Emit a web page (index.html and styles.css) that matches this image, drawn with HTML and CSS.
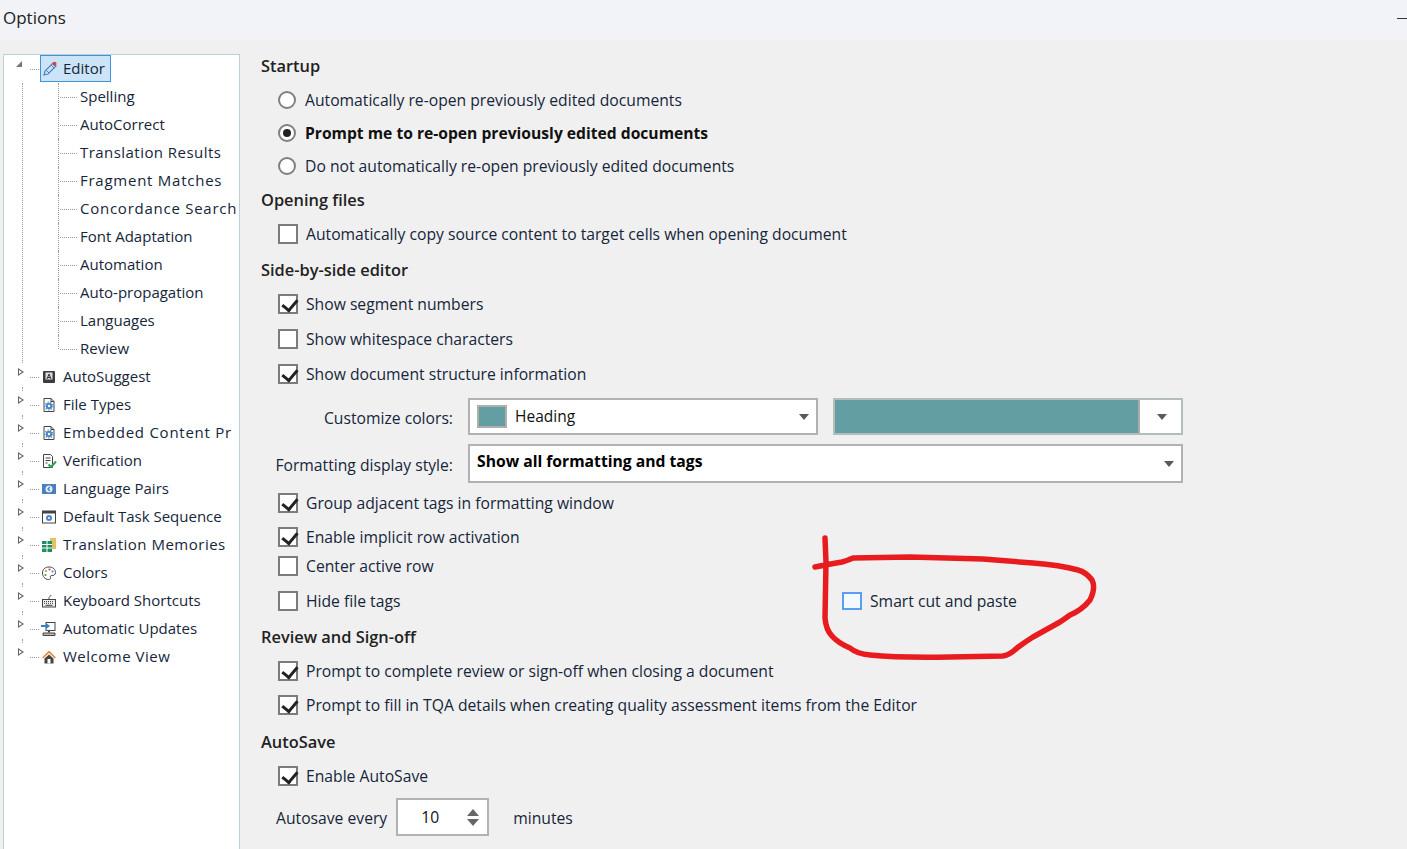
FILE: index.html
```html
<!DOCTYPE html>
<html lang="en">
<head>
<meta charset="utf-8">
<title>Options</title>
<link rel="stylesheet" href="styles.css">
</head>
<body>
<svg class="defs" width="0" height="0" aria-hidden="true">
  <symbol id="i-docgear" viewBox="0 0 16 16">
    <path d="M3 1.500h7l3 3v10H3z" fill="#fff" stroke="#444" stroke-width="1"/>
    <path d="M10 1.500v3h3" fill="none" stroke="#444"/>
    <circle cx="8" cy="9" r="3.200" fill="#4a86c5"/>
    <circle cx="8" cy="9" r="4" fill="none" stroke="#4a86c5" stroke-width="1.200" stroke-dasharray="1.400 1.400"/>
    <circle cx="8" cy="9" r="1.200" fill="#fff"/>
  </symbol>
</svg>
<header class="titlebar">
  <span class="title">Options</span>
  <span class="minimize"></span>
</header>
<div class="main">
  <nav class="tree">
    <div class="node root open">
      <span class="expander-open"></span>
      <span class="selected">
        <svg class="icon" viewBox="0 0 16 16"><path d="M2 14l1-4 8-8 3 3-8 8z" fill="#cfe0f0" stroke="#4a86c5" stroke-width="1.200"/><path d="M4.500 9.500l2.500 2.500M9 4l3 3" stroke="#4a86c5"/><circle cx="12.500" cy="2.800" r="2" fill="#d9453c"/></svg>
        <span class="label">Editor</span>
      </span>
    </div>
    <div class="children">
      <div class="node child first"><span class="label">Spelling</span></div>
      <div class="node child"><span class="label">AutoCorrect</span></div>
      <div class="node child"><span class="label wide">Translation Results</span></div>
      <div class="node child"><span class="label wider">Fragment Matches</span></div>
      <div class="node child"><span class="label wider">Concordance Search</span></div>
      <div class="node child"><span class="label">Font Adaptation</span></div>
      <div class="node child"><span class="label">Automation</span></div>
      <div class="node child"><span class="label">Auto-propagation</span></div>
      <div class="node child"><span class="label">Languages</span></div>
      <div class="node child last"><span class="label">Review</span></div>
    </div>
    <div class="node root"><span class="expander"></span>
      <svg class="icon" viewBox="0 0 16 16"><rect x="2" y="2" width="12" height="12" rx="1" fill="#3c3c3c"/><rect x="4.500" y="3.500" width="7" height="7" fill="#ddd"/><path d="M6 10l2-5 2 5M6.800 8.500h2.400" stroke="#333" fill="none"/></svg>
      <span class="label">AutoSuggest</span></div>
    <div class="node root"><span class="expander"></span><svg class="icon"><use href="#i-docgear"/></svg><span class="label">File Types</span></div>
    <div class="node root"><span class="expander"></span><svg class="icon"><use href="#i-docgear"/></svg><span class="label wider">Embedded Content Pr</span></div>
    <div class="node root"><span class="expander"></span>
      <svg class="icon" viewBox="0 0 16 16"><path d="M2.500 1.500h7l2 2v11h-9z" fill="#fff" stroke="#444"/><path d="M4.500 5h5M4.500 7.500h5M4.500 10h2" stroke="#444"/><path d="M7.500 11.500l2.500 2.500 5-5.500" fill="none" stroke="#2f9e5b" stroke-width="2"/></svg>
      <span class="label">Verification</span></div>
    <div class="node root"><span class="expander"></span>
      <svg class="icon" viewBox="0 0 16 16"><rect x="1" y="3" width="14" height="10" fill="#4a80bd"/><circle cx="8" cy="8" r="3.500" fill="#e6eff8"/><path d="M8.800 6L7 8l1.800 2" fill="none" stroke="#4a80bd" stroke-width="1.400"/></svg>
      <span class="label">Language Pairs</span></div>
    <div class="node root"><span class="expander"></span>
      <svg class="icon" viewBox="0 0 16 16"><rect x="1.500" y="2" width="13" height="12" fill="#fff" stroke="#444"/><rect x="1.500" y="2" width="13" height="2.500" fill="#444"/><circle cx="8" cy="9" r="3" fill="#4a86c5"/><circle cx="8" cy="9" r="1" fill="#fff"/></svg>
      <span class="label">Default Task Sequence</span></div>
    <div class="node root"><span class="expander"></span>
      <svg class="icon" viewBox="0 0 16 16"><rect x="9" y="1" width="6" height="11" fill="#e8c063"/><rect x="1" y="4" width="10" height="11" fill="#1f8f5f"/><path d="M6 4v11M1 7.500h10M1 11h10" stroke="#fff"/></svg>
      <span class="label wide-more">Translation Memories</span></div>
    <div class="node root"><span class="expander"></span>
      <svg class="icon" viewBox="0 0 16 16"><path d="M8 2c4 0 6.500 2.500 6.500 5.500 0 2.500-2 3-3.500 3-1.500 0-2 1-1.500 2 .5 1.200-.5 2-2 2C4 14.500 1.500 11.500 1.500 8S4 2 8 2z" fill="#fff" stroke="#444"/><circle cx="5" cy="6" r="1.100" fill="#d9823c"/><circle cx="8.500" cy="4.500" r="1.100" fill="#c94a4a"/><circle cx="11.500" cy="6.500" r="1.100" fill="#4a86c5"/><circle cx="4.500" cy="10" r="1.100" fill="#3f9e5f"/></svg>
      <span class="label">Colors</span></div>
    <div class="node root"><span class="expander"></span>
      <svg class="icon" viewBox="0 0 16 16"><path d="M8 6V4.500C8 3 10 4 10 2" fill="none" stroke="#555"/><rect x="1.500" y="6.500" width="13" height="7.500" fill="#eee" stroke="#444"/><path d="M3 8.500h10M3 10.300h10" stroke="#444" stroke-dasharray="1 1"/><path d="M4.500 12.300h7" stroke="#444"/></svg>
      <span class="label">Keyboard Shortcuts</span></div>
    <div class="node root"><span class="expander"></span>
      <svg class="icon" viewBox="0 0 16 16"><rect x="5" y="1.500" width="9" height="8" fill="#fff" stroke="#444"/><path d="M8 9.500v2" stroke="#444" stroke-width="2"/><path d="M2 12h12v2.500H2z" fill="#bbb" stroke="#444"/><path d="M0 5h6" stroke="#3a7fc4" stroke-width="2"/><path d="M5 2l4 3-4 3z" fill="#3a7fc4"/></svg>
      <span class="label">Automatic Updates</span></div>
    <div class="node root end"><span class="expander"></span>
      <svg class="icon" viewBox="0 0 16 16"><path d="M8 1.500L1 8.500l1.200 1L8 4l5.800 5.500 1.200-1z" fill="#e58a3a"/><path d="M3.500 9.500L8 5.500l4.500 4v5h-9z" fill="#444"/><rect x="6.500" y="10" width="3" height="4.500" fill="#fff"/></svg>
      <span class="label wide-more">Welcome View</span></div>
  </nav>

  <form class="form">
    <div class="row heading">Startup</div>
    <label class="row indent"><span class="radio"></span><span class="text">Automatically re-open previously edited documents</span></label>
    <label class="row indent mt9"><span class="radio on"></span><span class="text strong">Prompt me to re-open previously edited documents</span></label>
    <label class="row indent mt9"><span class="radio"></span><span class="text">Do not automatically re-open previously edited documents</span></label>
    <div class="row heading">Opening files</div>
    <label class="row indent"><span class="box"></span><span class="text">Automatically copy source content to target cells when opening document</span></label>
    <div class="row heading mt12">Side-by-side editor</div>
    <label class="row indent"><span class="box checked"></span><span class="text">Show segment numbers</span></label>
    <label class="row indent mt11"><span class="box"></span><span class="text">Show whitespace characters</span></label>
    <label class="row indent mt11"><span class="box checked"></span><span class="text">Show document structure information</span></label>

    <div class="row combo-row mt12">
      <span class="field-label">Customize colors:</span>
      <div class="combo heading-combo"><span class="swatch"></span><span class="combo-text">Heading</span><span class="arrow"></span></div>
      <div class="combo color-combo"><span class="color-fill"></span><span class="color-drop"><span class="arrow"></span></span></div>
    </div>
    <div class="row format-row mt9">
      <span class="field-label">Formatting display style:</span>
      <div class="combo format-combo"><span class="combo-text bold">Show all formatting and tags</span><span class="arrow"></span></div>
    </div>

    <label class="row indent mt8"><span class="box checked"></span><span class="text">Group adjacent tags in formatting window</span></label>
    <label class="row indent"><span class="box checked"></span><span class="text">Enable implicit row activation</span></label>
    <label class="row indent mt5"><span class="box"></span><span class="text">Center active row</span></label>
    <div class="row indent mt11">
      <label class="option half"><span class="box"></span><span class="text">Hide file tags</span></label>
      <label class="option"><span class="box focus"></span><span class="text">Smart cut and paste</span></label>
    </div>
    <div class="row heading mt12">Review and Sign-off</div>
    <label class="row indent"><span class="box checked"></span><span class="text">Prompt to complete review or sign-off when closing a document</span></label>
    <label class="row indent"><span class="box checked"></span><span class="text">Prompt to fill in TQA details when creating quality assessment items from the Editor</span></label>
    <div class="row heading mt13">AutoSave</div>
    <label class="row indent"><span class="box checked"></span><span class="text">Enable AutoSave</span></label>
    <div class="row spin-row">
      <span class="spin-label">Autosave every</span>
      <div class="spinner"><span class="spin-value">10</span><span class="spin-arrows"><span class="up"></span><span class="down"></span></span></div>
      <span class="spin-label">minutes</span>
    </div>
  </form>
</div>
<svg class="scribble" width="1407" height="849" viewBox="0 0 1407 849" aria-hidden="true">
  <path d="M825 538 L826 562 L825 618 Q826 630 832 636 Q838 643 850 648 Q857 654 870 655 Q900 658 950 657 L1003 656 Q1010 655 1017 648 Q1025 642 1033 637 L1060 622 Q1066 618 1070 615 Q1082 610 1090 600 Q1096 588 1092 580 Q1086 572 1078 570 Q1060 565 1033 563 L983 559 L910 557 L853 558 Q846 561 842 562 Q830 564 815 567" fill="none" stroke="#e81c1f" stroke-width="5.500" stroke-linecap="round" stroke-linejoin="round"/>
</svg>
</body>
</html>
```
FILE: styles.css
```css
* { box-sizing: border-box; }
html, body { margin: 0; height: 100%; overflow: hidden; }
body {
  background: #f0f0f0;
  font-family: "Open Sans", "Noto Sans", sans-serif;
  font-size: 15px;
  color: #16263a;
}
.defs { position: absolute; }

.titlebar {
  height: 40px;
  background: #f1f3f9;
  display: flex;
  align-items: center;
  justify-content: space-between;
  padding-left: 3px;
}
.title { font-size: 17px; color: #222; margin-top: -6px; }
.minimize { width: 10px; height: 1px; background: #333; margin-top: -4px; }

.main { display: flex; height: 809px; }

.tree {
  width: 237px;
  margin: 14px 0 -20px 3px;
  background: #fff;
  border: 1px solid #bcd0da;
  flex: none;
  overflow: hidden;
}
.node {
  position: relative;
  display: flex;
  align-items: center;
  height: 28px;
  white-space: nowrap;
}
.root { padding-left: 37px; gap: 6px; }
.root.open { padding-left: 36px; align-items: flex-start; }
.child { padding-left: 76px; }
.selected {
  display: flex;
  align-items: center;
  gap: 5px;
  height: 27px;
  width: 71px;
  background: #cce4f7;
  border: 1px solid #3d94d6;
  padding-left: 1px;
}
.icon { width: 16px; height: 16px; flex: none; }
.label { margin-top: -2px; }
.wide { letter-spacing: .45px; }
.wide-more { letter-spacing: .5px; }
.wider { letter-spacing: .75px; }

/* tree connectors */
.root::before {
  content: "";
  position: absolute;
  left: 26px;
  width: 9px;
  top: 14px;
  border-top: 1px dotted #999;
}
.child::before {
  content: "";
  position: absolute;
  left: 56px;
  width: 17px;
  top: 14px;
  border-top: 1px dotted #999;
}
.child::after {
  content: "";
  position: absolute;
  left: 54px;
  top: 0;
  height: 28px;
  border-left: 1px dotted #999;
}
.child.last::after { height: 14px; }
.root:not(.open):not(.end)::after {
  content: "";
  position: absolute;
  left: 18px;
  top: 24px;
  height: 4px;
  border-left: 1px dotted #999;
}
.children {
  position: relative;
}
.children::before {
  content: "";
  position: absolute;
  left: 18px;
  top: 0;
  bottom: 0;
  border-left: 1px dotted #999;
}
.expander {
  position: absolute;
  left: 14px;
  top: 5px;
  width: 0;
  height: 0;
  border-left: 6px solid #666;
  border-top: 4.500px solid transparent;
  border-bottom: 4.500px solid transparent;
}
.expander::after {
  content: "";
  position: absolute;
  left: -5px;
  top: -2.500px;
  border-left: 3px solid #fff;
  border-top: 2.500px solid transparent;
  border-bottom: 2.500px solid transparent;
}
.expander-open {
  position: absolute;
  left: 12px;
  top: 6px;
  width: 0;
  height: 0;
  border-bottom: 6px solid #777;
  border-left: 6px solid transparent;
}

/* form */
.form {
  flex: 1;
  padding: 14px 0 0 21px;
  display: flex;
  flex-direction: column;
  min-width: 0;
  font-size: 15.700px;
}
.row {
  display: flex;
  align-items: center;
  height: 24px;
  margin-top: 10px;
  flex: none;
  white-space: nowrap;
}
.text { margin-top: -1px; }
.heading { font-weight: 600; color: #222; font-size: 16.400px; padding-bottom: 2px; }
.form > .row:first-child { margin-top: 0; }
.mt5 { margin-top: 5px; }
.mt8 { margin-top: 8px; }
.mt9 { margin-top: 9px; }
.mt11 { margin-top: 11px; }
.mt12 { margin-top: 12px; }
.mt13 { margin-top: 13px; }
.indent { padding-left: 17px; }
.option { display: flex; align-items: center; }
.half { width: 564px; }
.strong { font-weight: 700; color: #111; font-size: 15.650px; }

.radio {
  width: 18px;
  height: 18px;
  margin-right: 9px;
  border-radius: 50%;
  border: 2px solid #808080;
  background: #fff;
  flex: none;
  display: flex;
  align-items: center;
  justify-content: center;
}
.radio.on::after {
  content: "";
  width: 8px;
  height: 8px;
  border-radius: 50%;
  background: #222;
}
.box {
  position: relative;
  width: 20px;
  height: 20px;
  margin-right: 8px;
  border: 2px solid #7c7c7c;
  background: #fff;
  flex: none;
}
.box.checked::after {
  content: "";
  position: absolute;
  left: 5px;
  top: 0;
  width: 6.500px;
  height: 12px;
  border-right: 3px solid #222;
  border-bottom: 3px solid #222;
  transform: rotate(40deg);
}
.box.focus {
  height: 18px;
  border-color: #5b9df5;
  background: #f3f9ff;
}

.combo-row { height: 37px; }
.format-row { height: 39px; }
.field-label { width: 192px; text-align: right; margin-right: 15px; flex: none; padding-top: 2px; }
.combo {
  display: flex;
  align-items: center;
  background: #fff;
  border: 2px solid #b2b2b2;
  height: 100%;
  position: relative;
}
.heading-combo { width: 350px; padding-left: 7px; margin-right: 15px; }
.swatch {
  width: 30px;
  height: 23px;
  background: #629ea2;
  border: 2px solid #aeaeae;
  margin-right: 8px;
  margin-top: -1px;
}
.combo-text { font-size: 15.500px; color: #111; margin-top: -2px; }
.bold { font-weight: 700; color: #000; margin-top: -5px; font-size: 15.700px; }
.arrow {
  width: 0;
  height: 0;
  border-top: 6px solid #5a5a5a;
  border-left: 5.500px solid transparent;
  border-right: 5.500px solid transparent;
  position: absolute;
  right: 7px;
  top: 14px;
}
.color-combo { width: 350px; align-items: stretch; border-color: #b5bcbc; }
.color-fill { width: 305px; background: #629ea2; border-right: 2px solid #aaa; }
.color-drop { flex: 1; position: relative; }
.color-drop .arrow { right: 14px; top: 14px; }
.format-combo { width: 715px; padding-left: 7px; }
.format-combo .arrow { right: 7px; top: 15px; }

.spin-row { height: 38px; padding-left: 15px; }
.spin-label { padding-top: 1px; }
.spinner {
  width: 93px;
  height: 38px;
  margin: 0 24px 0 9px;
  background: #fff;
  border: 2px solid #b2b2b2;
  display: flex;
  align-items: center;
  justify-content: space-between;
  padding: 0 8px 0 23px;
  color: #111;
}
.spin-arrows { display: flex; flex-direction: column; gap: 3px; }
.up, .down {
  width: 0;
  height: 0;
  border-left: 6.500px solid transparent;
  border-right: 6.500px solid transparent;
}
.up { border-bottom: 7px solid #666; }
.down { border-top: 7px solid #666; }

.scribble { position: absolute; left: 0; top: 0; pointer-events: none; }
```
